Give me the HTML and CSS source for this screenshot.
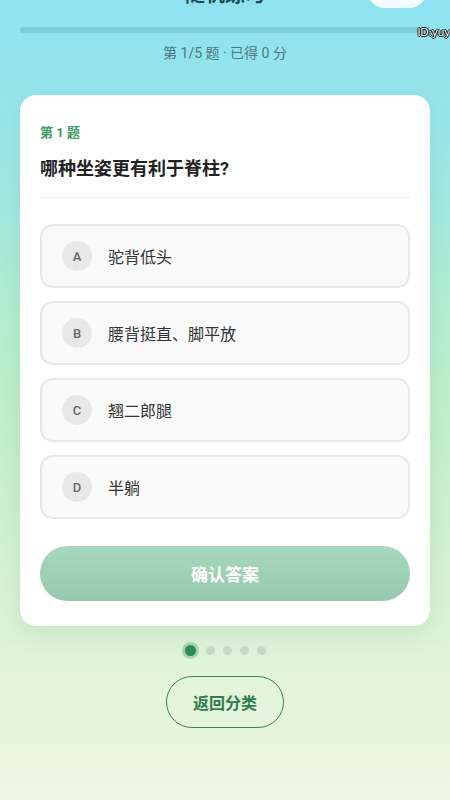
FILE: index.html
```html
<!DOCTYPE html>
<html lang="zh-CN">
<head>
<meta charset="utf-8">
<meta name="viewport" content="width=450">
<link rel="stylesheet" href="styles.css">
</head>
<body>
<div class="page">
  <header class="header">
    <div class="title">随机练习</div>
    <div class="pill"></div>
  </header>
  <div class="progress"><div class="progress-fill"></div></div>
  <div class="watermark">ID:yuy</div>
  <div class="status">第 1/5 题 · 已得 0 分</div>

  <section class="card">
    <div class="qno">第 1 题</div>
    <div class="question">哪种坐姿更有利于脊柱?</div>
    <div class="divider"></div>
    <div class="options">
      <div class="option"><span class="letter">A</span><span class="otext">驼背低头</span></div>
      <div class="option"><span class="letter">B</span><span class="otext">腰背挺直、脚平放</span></div>
      <div class="option"><span class="letter">C</span><span class="otext">翘二郎腿</span></div>
      <div class="option"><span class="letter">D</span><span class="otext">半躺</span></div>
    </div>
    <button class="confirm">确认答案</button>
  </section>

  <div class="dots">
    <span class="dot active"></span>
    <span class="dot"></span>
    <span class="dot"></span>
    <span class="dot"></span>
    <span class="dot"></span>
  </div>
  <div class="back-wrap"><button class="back">返回分类</button></div>
</div>
</body>
</html>
```

FILE: styles.css
```css
html, body {
  margin: 0;
  padding: 0;
}
body {
  width: 450px;
  height: 800px;
  overflow: hidden;
  font-family: Roboto, "Noto Sans CJK SC", sans-serif;
  background: linear-gradient(180deg, #8ee2f1 0%, #9ce6e6 20%, #b2eed2 38%, #bff0c8 50%, #d4f1d4 70%, #e2f4da 85%, #edf5e2 100%);
}
.page {
  position: relative;
  padding: 1px 20px 0;
}
.header {
  margin-top: -29px;
  height: 36px;
  position: relative;
  display: flex;
  justify-content: center;
  align-items: center;
}
.title {
  font-size: 20px;
  font-weight: 700;
  color: #1d4a50;
  line-height: 30px;
  margin-top: 9px;
}
.pill {
  position: absolute;
  right: 3px;
  top: 0;
  width: 60px;
  height: 36px;
  border-radius: 18px;
  background: #f4fbfc;
}
.progress {
  margin-top: 19px;
  height: 6px;
  border-radius: 3px;
  background: #7ccfd9;
}
.progress-fill {
  width: 0;
  height: 100%;
}
.watermark {
  position: absolute;
  right: 0;
  top: 26px;
  font-family: "DejaVu Sans", sans-serif;
  font-size: 11px;
  letter-spacing: -0.5px;
  color: #ffffff;
  text-shadow: -1px 0 #000, 1px 0 #000, 0 -1px #000, 0 1px #000;
}
.status {
  margin-top: 10px;
  text-align: center;
  font-size: 14px;
  line-height: 20px;
  color: #4a7a7f;
}
.card {
  margin-top: 32px;
  background: #ffffff;
  border-radius: 16px;
  padding: 29px 20px 25px;
  box-shadow: 0 8px 24px rgba(60, 120, 90, 0.12);
}
.qno {
  font-size: 13px;
  font-weight: 700;
  color: #3a9a62;
  line-height: 18px;
}
.question {
  margin-top: 15px;
  font-size: 18px;
  font-weight: 700;
  color: #222;
  line-height: 24px;
}
.divider {
  margin-top: 16px;
  height: 1px;
  background: #eeeeee;
}
.options {
  margin-top: 26px;
  display: flex;
  flex-direction: column;
  gap: 13px;
}
.option {
  height: 60px;
  border: 2px solid #e8e8e8;
  border-radius: 13px;
  background: #fafafa;
  display: flex;
  align-items: center;
  padding-left: 20px;
}
.letter {
  width: 30px;
  height: 30px;
  border-radius: 50%;
  background: #e8e8e8;
  color: #666;
  font-size: 13px;
  font-weight: 500;
  display: flex;
  align-items: center;
  justify-content: center;
}
.otext {
  margin-left: 16px;
  font-size: 16px;
  color: #333;
}
.confirm {
  margin-top: 27px;
  width: 100%;
  height: 55px;
  border: none;
  border-radius: 28px;
  background: linear-gradient(180deg, #a7d9bd 0%, #95c8ad 100%);
  color: #ffffff;
  font-family: Roboto, "Noto Sans CJK SC", sans-serif;
  font-size: 17px;
  font-weight: 700;
  display: block;
}
.dots {
  margin-top: 17px;
  display: flex;
  justify-content: center;
  align-items: center;
  gap: 8px;
  height: 14px;
}
.dot {
  width: 9px;
  height: 9px;
  border-radius: 50%;
  background: #c6d9c8;
}
.dot.active {
  width: 11px;
  height: 11px;
  background: #2e8b57;
  box-shadow: 0 0 0 3px rgba(60, 160, 100, 0.35);
  margin-right: 2px;
}
.back-wrap {
  margin-top: 19px;
  display: flex;
  justify-content: center;
}
.back {
  width: 118px;
  height: 52px;
  border: 1.5px solid #3f7f57;
  border-radius: 26px;
  background: transparent;
  color: #2f7d4f;
  font-family: Roboto, "Noto Sans CJK SC", sans-serif;
  font-size: 16px;
  font-weight: 700;
}
```
